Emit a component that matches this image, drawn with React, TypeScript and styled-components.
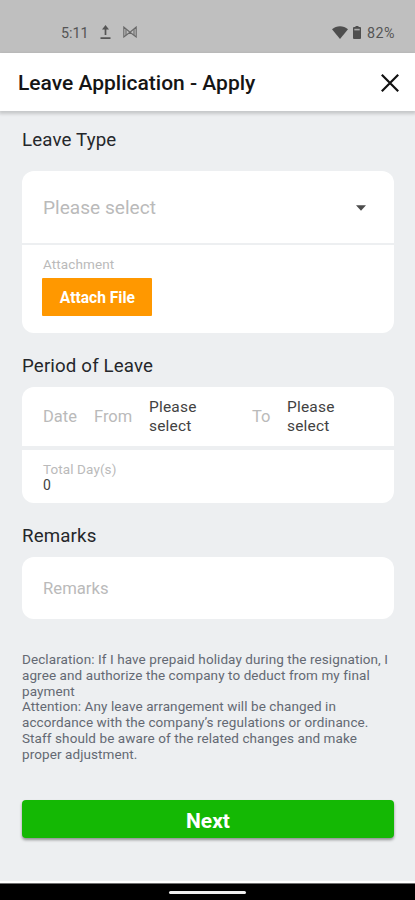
import React from 'react';
import styled, { createGlobalStyle } from 'styled-components';

const GlobalStyle = createGlobalStyle`
  * { box-sizing: border-box; }
  body { margin: 0; background: #edeff1; }
  button { font-family: inherit; border: 0; padding: 0; margin: 0; cursor: pointer; }
`;

const Screen = styled.div`
  width: 415px;
  height: 900px;
  display: flex;
  flex-direction: column;
  overflow: hidden;
  background: #edeff1;
  font-family: Roboto, 'Liberation Sans', sans-serif;
  color: #25272b;
`;

const StatusBar = styled.div`
  height: 53px;
  flex: none;
  display: flex;
  justify-content: space-between;
  padding: 23px 20px 0 61px;
  background: #bfbfbf;
  color: #555;
  font-size: 14.3px;
  line-height: 20px;
`;

const StatusGroup = styled.div<{ $gap: number }>`
  display: flex;
  align-items: center;
  height: 20px;
  gap: ${(p) => p.$gap}px;
  svg { display: block; margin-bottom: 2px; }
`;

const StatusText = styled.span<{ $spacing: number }>`
  letter-spacing: ${(p) => p.$spacing}px;
`;

const Header = styled.header`
  height: 58px;
  flex: none;
  display: flex;
  align-items: center;
  justify-content: space-between;
  padding: 2px 15px 0 18px;
  background: #fff;
  box-shadow: 0 2px 3px 1px rgba(0, 0, 0, 0.16);
`;

const Title = styled.h1`
  margin: 0;
  font-size: 21px;
  font-weight: 500;
  line-height: 24px;
  color: #151515;
`;

const CloseButton = styled.button`
  width: 20px;
  height: 20px;
  margin-bottom: 1px;
  background: none;
  svg { display: block; }
`;

const Content = styled.main`
  flex: 1;
  padding: 0 21px 0 22px;
`;

const SectionTitle = styled.h2<{ $top: number; $bottom: number }>`
  margin: ${(p) => p.$top}px 0 ${(p) => p.$bottom}px;
  font-size: 18.7px;
  font-weight: 400;
  line-height: 22px;
  letter-spacing: 0.15px;
`;

const Card = styled.section<{ $divider: number }>`
  display: flex;
  flex-direction: column;
  gap: ${(p) => p.$divider}px;
  border-radius: 12px;
  overflow: hidden;
`;

const Panel = styled.div<{ $height: number }>`
  height: ${(p) => p.$height}px;
  padding: 0 21px;
  background: #fff;
`;

const SelectRow = styled(Panel)`
  display: flex;
  align-items: center;
  justify-content: space-between;
  padding-top: 2px;
  padding-right: 28px;
`;

const DateRow = styled(Panel)`
  display: grid;
  grid-template-columns: 51px 55px 103px 35px 70px;
  align-items: center;
`;

const Placeholder = styled.span<{ $size: number }>`
  font-size: ${(p) => p.$size}px;
  line-height: 24px;
  color: #bababa;
`;

const DateValue = styled.span`
  width: 60px;
  font-size: 15.5px;
  line-height: 19px;
  letter-spacing: 0.2px;
  color: #424242;
`;

const FieldLabel = styled.div<{ $top: number }>`
  padding-top: ${(p) => p.$top}px;
  font-size: 13.5px;
  line-height: 16px;
  letter-spacing: 0.1px;
  color: #bababa;
`;

const FieldValue = styled.div`
  font-size: 14px;
  line-height: 16px;
  color: #424242;
`;

const AttachButton = styled.button`
  display: block;
  width: 110px;
  height: 38px;
  margin: 6px 0 0 -0.6px;
  padding-top: 1px;
  border-radius: 1px;
  background: #ff9800;
  color: #fff;
  font-size: 15.6px;
  font-weight: 700;
`;

const Declaration = styled.p`
  margin: 33px -10px 0 0;
  font-size: 13.5px;
  line-height: 15.8px;
  letter-spacing: 0.09px;
  color: #646973;
  white-space: nowrap;
`;

const NextButton = styled.button`
  display: block;
  width: 100%;
  height: 38px;
  margin-top: 37.9px;
  padding-top: 4px;
  border-radius: 4px;
  background: #14b804;
  color: #fff;
  font-size: 21px;
  font-weight: 700;
  box-shadow: 0 2px 3px rgba(0, 0, 0, 0.4);
`;

const NavigationBar = styled.div`
  height: 19px;
  flex: none;
  display: flex;
  justify-content: center;
  padding-top: 8px;
  border-top: 2px solid #fff;
  background: #000;
  box-shadow: inset 0 1px 0 #707070;
`;

const HomeIndicator = styled.div`
  width: 77px;
  height: 3px;
  border-radius: 2px;
  background: #efefef;
`;

const UploadIcon = () => (
  <svg width="11" height="14" viewBox="0 0 11 14" fill="none" stroke="#555">
    <path d="M5.5 10V2M.5 13.2h10" strokeWidth="1.7" />
    <path d="M5.5 0 9 4.5H2z" fill="#555" stroke="none" />
  </svg>
);

const NotificationIcon = () => (
  <svg width="14" height="12" viewBox="0 0 14 12" fill="none" stroke="#686868" strokeWidth="1.1">
    <path d="M.8 11V1l6.2 5.2L13.2 1v10L7 6.2z" />
    <path d="M3 3v6M11 3v6" />
  </svg>
);

const WifiIcon = () => (
  <svg width="16" height="13" viewBox="0 0 16 13">
    <path d="M0 3.3C4.5-.8 11.5-.8 16 3.3L8 13z" fill="#4e4e4e" />
  </svg>
);

const BatteryIcon = () => (
  <svg width="8" height="13" viewBox="0 0 8 13">
    <path d="M2.5 0h3v1H7q1 0 1 1v10q0 1-1 1H1q-1 0-1-1V2q0-1 1-1h1.5z" fill="#4e4e4e" />
    <path d="M1.3 2.8h5.4v1.6H1.3z" fill="#aaa" />
  </svg>
);

const CloseIcon = () => (
  <svg width="20" height="20" viewBox="0 0 20 20">
    <path d="m1.8 1.8 16.4 16.4M18.2 1.8 1.8 18.2" stroke="#111" strokeWidth="2.2" />
  </svg>
);

const CaretIcon = () => (
  <svg width="10" height="6" viewBox="0 0 10 6">
    <path d="M0 0.3h10L5 5.7z" fill="#4c4c4c" />
  </svg>
);

export default function App() {
  return (
    <>
      <GlobalStyle />
      <Screen>
        <StatusBar>
          <StatusGroup $gap={11.5}>
            <StatusText $spacing={0}>5:11</StatusText>
            <UploadIcon />
            <NotificationIcon />
          </StatusGroup>
          <StatusGroup $gap={5.5}>
            <WifiIcon />
            <BatteryIcon />
            <StatusText $spacing={0.5}>82%</StatusText>
          </StatusGroup>
        </StatusBar>
        <Header>
          <Title>Leave Application - Apply</Title>
          <CloseButton aria-label="Close"><CloseIcon /></CloseButton>
        </Header>
        <Content>
          <SectionTitle $top={18} $bottom={20}>Leave Type</SectionTitle>
          <Card $divider={2}>
            <SelectRow $height={72}>
              <Placeholder $size={19.1}>Please select</Placeholder>
              <CaretIcon />
            </SelectRow>
            <Panel $height={88}>
              <FieldLabel $top={11}>Attachment</FieldLabel>
              <AttachButton>Attach File</AttachButton>
            </Panel>
          </Card>
          <SectionTitle $top={22} $bottom={10}>Period of Leave</SectionTitle>
          <Card $divider={4}>
            <DateRow $height={59}>
              <Placeholder $size={16.5}>Date</Placeholder>
              <Placeholder $size={16.5}>From</Placeholder>
              <DateValue>Please select</DateValue>
              <Placeholder $size={16.5}>To</Placeholder>
              <DateValue>Please select</DateValue>
            </DateRow>
            <Panel $height={53}>
              <FieldLabel $top={11}>Total Day(s)</FieldLabel>
              <FieldValue>0</FieldValue>
            </Panel>
          </Card>
          <SectionTitle $top={22} $bottom={10}>Remarks</SectionTitle>
          <Card $divider={0}>
            <SelectRow $height={62}>
              <Placeholder $size={16.7}>Remarks</Placeholder>
            </SelectRow>
          </Card>
          <Declaration>
            Declaration: If I have prepaid holiday during the resignation, I<br />
            agree and authorize the company to deduct from my final<br />
            payment<br />
            Attention: Any leave arrangement will be changed in<br />
            accordance with the company’s regulations or ordinance.<br />
            Staff should be aware of the related changes and make<br />
            proper adjustment.
          </Declaration>
          <NextButton>Next</NextButton>
        </Content>
        <NavigationBar><HomeIndicator /></NavigationBar>
      </Screen>
    </>
  );
}
